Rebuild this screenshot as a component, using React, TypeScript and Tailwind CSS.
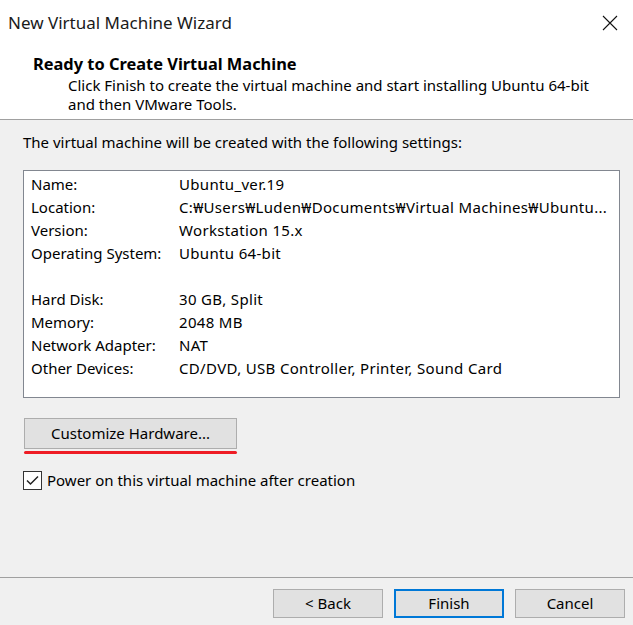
import React from "react";

const font = { fontFamily: '"Segoe UI", "Noto Sans", "Open Sans", sans-serif' };

function Row({ label, value }: { label: string; value: string }) {
  return (
    <div className="flex h-[23px] items-center">
      <div className="w-[148px] shrink-0">{label}</div>
      <div className="whitespace-nowrap tracking-[0.33px]">{value}</div>
    </div>
  );
}

export default function App() {
  return (
    <div
      className="w-[633px] h-[625px] bg-[#f0f0f0] flex flex-col text-[15px] text-black overflow-hidden"
      style={font}
    >
      <div className="h-[120px] bg-white border-b border-[#a0a0a0] flex flex-col shrink-0">
        <div className="h-[46px] flex items-center justify-between pl-[8px] pr-[15px]">
          <span className="text-[17px] text-[#1a1a1a]">New Virtual Machine Wizard</span>
          <svg width="16" height="16" viewBox="0 0 16 16" className="shrink-0">
            <path d="M1 1 L15 15 M15 1 L1 15" stroke="#111" strokeWidth="1.1" />
          </svg>
        </div>
        <div className="pl-[33px] mt-[7px] font-bold text-[16.4px] leading-[21px]">Ready to Create Virtual Machine</div>
        <div className="pl-[68px] leading-[19px] mt-[2px]">
          <div>Click Finish to create the virtual machine and start installing Ubuntu 64-bit</div>
          <div>and then VMware Tools.</div>
        </div>
      </div>

      <div className="flex-1 flex flex-col px-[23px]">
        <div className="mt-[12px] leading-[20px]">The virtual machine will be created with the following settings:</div>
        <div className="mt-[18px] h-[228px] w-[597px] bg-white border border-[#828790] pl-[7px] pt-[2px] overflow-hidden">
          <Row label="Name:" value="Ubuntu_ver.19" />
          <Row label="Location:" value="C:₩Users₩Luden₩Documents₩Virtual Machines₩Ubuntu..." />
          <Row label="Version:" value="Workstation 15.x" />
          <Row label="Operating System:" value="Ubuntu 64-bit" />
          <div className="h-[23px]" />
          <Row label="Hard Disk:" value="30 GB, Split" />
          <Row label="Memory:" value="2048 MB" />
          <Row label="Network Adapter:" value="NAT" />
          <Row label="Other Devices:" value="CD/DVD, USB Controller, Printer, Sound Card" />
        </div>
        <button className="mt-[20px] ml-[1px] w-[213px] h-[31px] bg-[#e1e1e1] border border-[#adadad] flex items-center justify-center">
          Customize Hardware...
        </button>
        <div className="mt-[2px] ml-[1px] w-[213px] h-[3px] bg-[#ee1c25] rounded-full" />
        <div className="mt-[15px] flex items-center">
          <div className="w-[19px] h-[19px] border border-[#333] bg-white flex items-center justify-center shrink-0">
            <svg width="13" height="11" viewBox="0 0 13 11">
              <path d="M1 5.5 L4.5 9 L12 1.5" fill="none" stroke="#222" strokeWidth="1.5" />
            </svg>
          </div>
          <span className="ml-[5px]">Power on this virtual machine after creation</span>
        </div>
      </div>

      <div className="h-[48px] border-t border-[#a0a0a0] flex items-start justify-end pr-[8px] pt-[11px] gap-[11px] shrink-0">
        <button className="w-[110px] h-[29px] bg-[#e1e1e1] border border-[#adadad] flex items-center justify-center">
          &lt; Back
        </button>
        <button className="w-[110px] h-[29px] bg-[#e1e1e1] border-2 border-[#0078d7] flex items-center justify-center">
          Finish
        </button>
        <button className="w-[110px] h-[29px] bg-[#e1e1e1] border border-[#adadad] flex items-center justify-center">
          Cancel
        </button>
      </div>
    </div>
  );
}
